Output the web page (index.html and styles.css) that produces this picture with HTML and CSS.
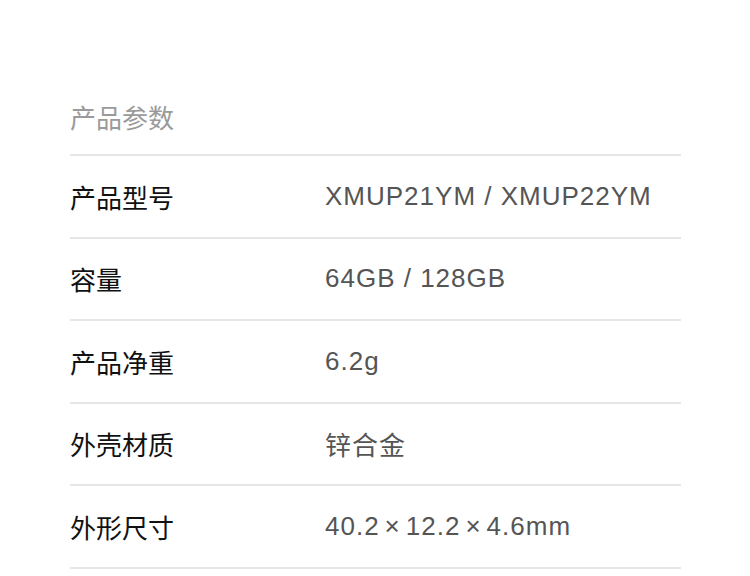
FILE: index.html
```html
<!DOCTYPE html>
<html lang="zh-CN">
<head>
  <meta charset="UTF-8">
  <title>产品参数</title>
  <link rel="stylesheet" href="styles.css">
</head>
<body>

<div class="specs">
  <h3 class="specs-title">产品参数</h3>
  <div class="row">
    <span class="label">产品型号</span>
    <span class="value">XMUP21YM / XMUP22YM</span>
  </div>
  <div class="row">
    <span class="label">容量</span>
    <span class="value">64GB / 128GB</span>
  </div>
  <div class="row">
    <span class="label">产品净重</span>
    <span class="value">6.2g</span>
  </div>
  <div class="row">
    <span class="label">外壳材质</span>
    <span class="value">锌合金</span>
  </div>
  <div class="row">
    <span class="label">外形尺寸</span>
    <span class="value">40.2<span class="times">×</span>12.2<span class="times">×</span>4.6mm</span>
  </div>
</div>

</body>
</html>
```

FILE: styles.css
```css
body {
  margin: 0;
  background: #fff;
  font-family: "Liberation Sans", "Noto Sans CJK SC", sans-serif;
}
.specs {
  width: 611px;
  margin-left: 70px;
  padding-top: 74px;
}
.specs-title {
  margin: 0;
  height: 82px;
  display: flex;
  align-items: center;
  padding-top: 4px;
  box-sizing: border-box;
  font-size: 26px;
  font-weight: normal;
  color: #9a9a9a;
  border-bottom: 2px solid #e6e6e6;
}
.row {
  display: flex;
  align-items: center;
  height: 82.5px;
  box-sizing: border-box;
  border-bottom: 2px solid #e6e6e6;
}
.label {
  width: 255px;
  font-size: 26px;
  color: #111;
}
.value {
  font-size: 26px;
  letter-spacing: 1px;
  color: #555;
}
.times {
  margin: 0 5px;
}
```
